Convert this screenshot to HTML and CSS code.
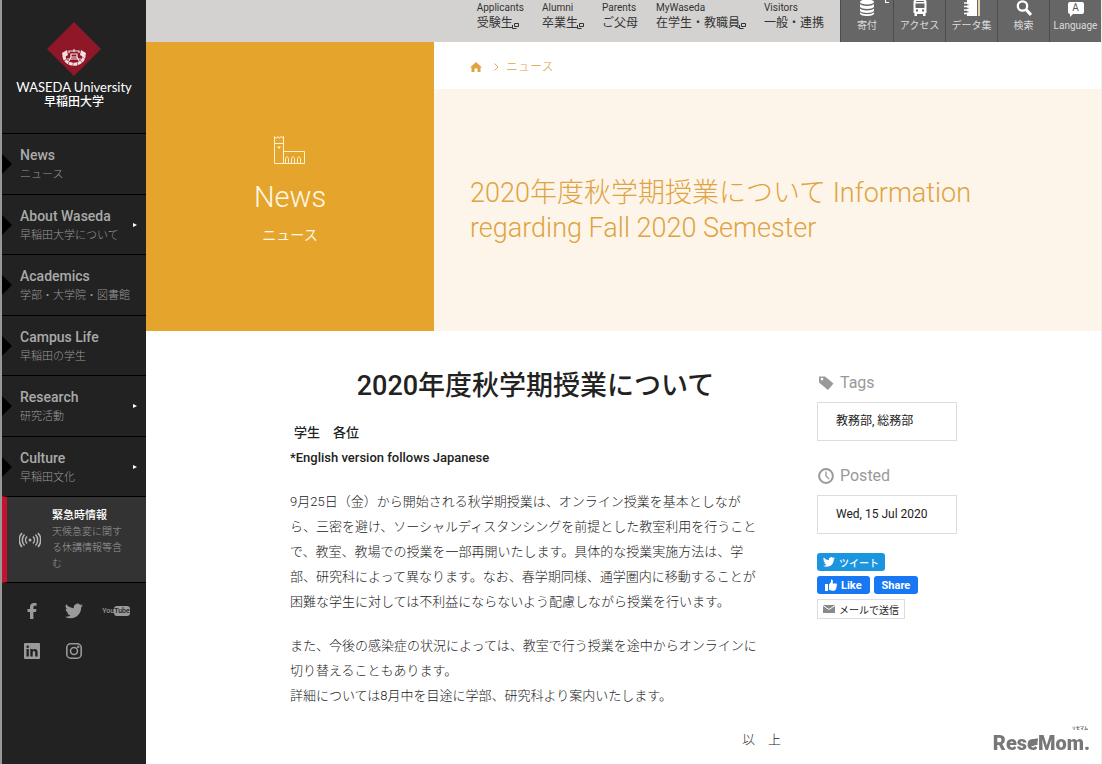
FILE: index.html
```html
<!DOCTYPE html>
<html lang="ja">
<head>
    <meta charset="UTF-8">
    <meta name="viewport" content="width=device-width, initial-scale=1.0">
    <title>2020年度秋学期授業について – 早稲田大学</title>
    <link rel="stylesheet" href="styles.css">
</head>
<body>
    <!-- shared icons -->
    <svg width="0" height="0" class="sprite" aria-hidden="true">
        <symbol id="twitter" viewBox="0 0 24 24">
            <path d="M24 4.6a10 10 0 0 1-2.8.8 5 5 0 0 0 2.1-2.7 10 10 0 0 1-3.1 1.2 4.9 4.9 0 0 0-8.4 4.5A14 14 0 0 1 1.7 3.1a4.9 4.9 0 0 0 1.5 6.6 5 5 0 0 1-2.2-.6v.1a4.9 4.9 0 0 0 3.9 4.8 5 5 0 0 1-2.2.1 4.9 4.9 0 0 0 4.6 3.4A10 10 0 0 1 0 19.5a14 14 0 0 0 7.5 2.2c9.1 0 14-7.5 14-14v-.6A10 10 0 0 0 24 4.6z"/>
        </symbol>
        <symbol id="window" viewBox="0 0 7 7">
            <path d="M2.5 1.5h4v3h-4zM.5 3v3.5h4" fill="none" stroke="currentColor"/>
        </symbol>
    </svg>

    <aside class="sidebar">
        <a class="logo" href="#">
            <svg width="54" height="54" viewBox="0 0 54 54" aria-hidden="true">
                <path fill="#8e1728" d="M27 0l27 27-27 27L0 27z"/>
                <path fill="none" stroke="#f6dfe2" stroke-width="3" stroke-dasharray="4 .5" d="M17 34c1 11 19 11 20 0"/>
                <path fill="#f6dfe2" d="M15 31l5-3 1 5-5 3zM39 31l-5-3-1 5 5 3z"/>
                <path fill="none" stroke="#f6dfe2" stroke-width="1.2" d="M22 31v-2h10v2M27 27v3M24 32h6v3h-6zM20 37h14M24 35l-2 4M30 35l2 4"/>
            </svg>
            <span class="logo-en">WASEDA University</span>
            <span class="logo-ja">早稲田大学</span>
        </a>

        <nav class="menu">
            <a href="#"><strong>News</strong><span>ニュース</span></a>
            <a href="#" class="has-sub"><strong>About Waseda</strong><span>早稲田大学について</span></a>
            <a href="#"><strong>Academics</strong><span>学部・大学院・図書館</span></a>
            <a href="#"><strong>Campus Life</strong><span>早稲田の学生</span></a>
            <a href="#" class="has-sub"><strong>Research</strong><span>研究活動</span></a>
            <a href="#" class="has-sub"><strong>Culture</strong><span>早稲田文化</span></a>
        </nav>

        <a class="emergency" href="#">
            <svg width="22" height="16" viewBox="0 0 22 16" fill="none" stroke="#b5b5b5" stroke-width="1.5" aria-hidden="true">
                <circle cx="11" cy="8" r="1.5" fill="#b5b5b5" stroke="none"/>
                <path d="M8 4.5a5 5 0 0 0 0 7M14 4.5a5 5 0 0 1 0 7M5.5 2.5a8 8 0 0 0 0 11M16.5 2.5a8 8 0 0 1 0 11M3 1a10.5 10.5 0 0 0 0 14M19 1a10.5 10.5 0 0 1 0 14"/>
            </svg>
            <span class="emergency-text"><strong>緊急時情報</strong>天候急変に関する休講情報等含む</span>
        </a>

        <div class="social">
            <a href="#" aria-label="Facebook">
                <svg width="16" height="16" viewBox="0 0 16 16"><path d="M6 16V9H3.500V6H6V4c0-2.700 1.500-4 4-4h2.500v2.800H11c-1.200 0-1.600.5-1.600 1.600V6h3l-.4 3H9.400v7z"/></svg>
            </a>
            <a href="#" aria-label="Twitter">
                <svg width="18" height="18"><use href="#twitter"/></svg>
            </a>
            <a href="#" class="youtube" aria-label="YouTube"><span>You</span><span class="tube">Tube</span></a>
            <a href="#" aria-label="LinkedIn">
                <svg width="16" height="16" viewBox="0 0 16 16"><path fill-rule="evenodd" d="M1 0h14a1 1 0 0 1 1 1v14a1 1 0 0 1-1 1H1a1 1 0 0 1-1-1V1a1 1 0 0 1 1-1zm1.500 6v7.500h2.300V6zm1.200-3.600a1.300 1.300 0 1 0 0 2.600 1.300 1.300 0 0 0 0-2.600zM6.300 6v7.500h2.400v-4c0-2 2.500-2.200 2.500 0v4h2.400V9c0-3.600-3.600-3.800-4.900-1.900V6z"/></svg>
            </a>
            <a href="#" aria-label="Instagram">
                <svg width="16" height="16" viewBox="0 0 16 16" fill="none" stroke="#9a9a9a" stroke-width="1.6"><rect x=".8" y=".8" width="14.4" height="14.4" rx="4"/><circle cx="8" cy="8" r="3.5"/><circle cx="12.2" cy="3.8" r=".5"/></svg>
            </a>
        </div>
    </aside>

    <main>
        <header class="topbar">
            <nav class="audience">
                <a href="#"><span>Applicants</span>受験生<svg width="7" height="7"><use href="#window"/></svg></a>
                <a href="#"><span>Alumni</span>卒業生<svg width="7" height="7"><use href="#window"/></svg></a>
                <a href="#"><span>Parents</span>ご父母</a>
                <a href="#"><span>MyWaseda</span>在学生・教職員<svg width="7" height="7"><use href="#window"/></svg></a>
                <a href="#"><span>Visitors</span>一般・連携</a>
            </nav>
            <nav class="tools">
                <a href="#">
                    <svg width="16" height="16" viewBox="0 0 16 16"><ellipse cx="8" cy="2" rx="7" ry="2.500"/><path d="M1 4c2 2.500 12 2.500 14 0v3c-2 2.500-12 2.500-14 0zM1 8.500c2 2.500 12 2.500 14 0v2.500c-2 2.500-12 2.500-14 0zM1 12.300c2 2.500 12 2.500 14 0V14c-2 2.700-12 2.700-14 0z"/></svg>
                    寄付
                    <svg class="corner" width="4" height="3" viewBox="0 0 4 3"><path d="M0 0h1v2h3v1H0z"/></svg>
                </a>
                <a href="#">
                    <svg width="16" height="16" viewBox="0 0 16 16"><path fill-rule="evenodd" d="M3 0h10c1 0 1.500.6 1.500 1.500V13h-1v3H11v-2H5v2H2.500v-3h-1V1.500C1.500.6 2 0 3 0zm1 1v1h8V1zM3.500 3.500V8h9V3.500zm.5 6v2h2v-2zm6 0v2h2v-2z"/></svg>
                    アクセス
                </a>
                <a href="#">
                    <svg width="16" height="16" viewBox="0 0 16 16"><path d="M3 0h10v16H3z"/><path fill="#e5d3b0" d="M14 0h2v16h-2z"/><path d="M0 3h4M0 6.500h4M0 10h4M0 13.500h4" stroke="#fff" stroke-width="1.5"/><path d="M3 4.800h1.500M3 8.300h1.500M3 11.800h1.500" stroke="#666"/></svg>
                    データ集
                </a>
                <a href="#">
                    <svg width="16" height="16" viewBox="0 0 16 16" fill="none" stroke="#fff"><circle cx="6.500" cy="6" r="4.700" stroke-width="2.3"/><path d="M10 9.500l5 5.500" stroke-width="3"/></svg>
                    検索
                </a>
                <a href="#">
                    <span class="bubble">A</span>
                    Language
                </a>
            </nav>
        </header>

        <section class="hero">
            <div class="category">
                <svg width="32" height="28" viewBox="0 0 32 28" fill="none" stroke="#fff3cf" aria-hidden="true">
                    <path d="M.5 27.500V.5l2 2 1.500-2 1.500 2 1.500-2 2.500 2V.5v27M.5 7.500h9M9.500.5v27M9.500 15.500h21v12H.5"/>
                    <path fill="#fff3cf" stroke="none" d="M3 10.500h4l-2 2.500z"/>
                    <path d="M11.500 27v-4.500c0-2 3-2 3 0V27M17.500 27v-4.500c0-2 3-2 3 0V27M23.500 27v-4.500c0-2 3-2 3 0V27"/>
                </svg>
                <p class="category-en">News</p>
                <p class="category-ja">ニュース</p>
            </div>
            <div class="headline">
                <nav class="breadcrumb">
                    <a href="#" aria-label="Home"><svg width="12" height="10" viewBox="0 0 12 10"><path d="M6 0l6 5.500h-1.500V10h-3V6.500h-3V10h-3V5.500H0z"/></svg></a>
                    <svg width="5" height="8" viewBox="0 0 5 8"><path d="M.5.5L4 4 .5 7.500" fill="none" stroke="#dfae52"/></svg>
                    <a href="#">ニュース</a>
                </nav>
                <h1>2020年度秋学期授業について Information regarding Fall 2020 Semester</h1>
            </div>
        </section>

        <div class="content">
            <article>
                <h2>2020年度秋学期授業について</h2>
                <p class="lead"><span>学生　各位</span><br>*English version follows Japanese</p>
                <p>9月25日（金）から開始される秋学期授業は、オンライン授業を基本としなが<br>ら、三密を避け、ソーシャルディスタンシングを前提とした教室利用を行うこと<br>で、教室、教場での授業を一部再開いたします。具体的な授業実施方法は、学<br>部、研究科によって異なります。なお、春学期同様、通学圏内に移動することが<br>困難な学生に対しては不利益にならないよう配慮しながら授業を行います。</p>
                <p>また、今後の感染症の状況によっては、教室で行う授業を途中からオンラインに<br>切り替えることもあります。<br>詳細については8月中を目途に学部、研究科より案内いたします。</p>
                <p class="closing">以　上</p>
            </article>

            <aside class="meta">
                <h3>
                    <svg width="16" height="16" viewBox="0 0 16 16"><path fill-rule="evenodd" d="M1 1.500h6l8.500 7-5.500 6.500L1 7.500zm3 1.300a1.300 1.300 0 1 0 0 2.600 1.300 1.300 0 0 0 0-2.600z"/></svg>
                    Tags
                </h3>
                <p class="box">教務部, 総務部</p>
                <h3>
                    <svg width="16" height="16" viewBox="0 0 16 16" fill="none" stroke="#999"><circle cx="8" cy="8" r="6.900" stroke-width="2"/><path d="M8 3.500V8l3 3" stroke-width="1.3"/></svg>
                    Posted
                </h3>
                <p class="box">Wed, 15 Jul 2020</p>
                <div class="share">
                    <button type="button" class="btn tweet"><svg width="12" height="12"><use href="#twitter"/></svg>ツイート</button>
                    <div class="facebook">
                        <button type="button" class="btn"><svg width="12" height="12" viewBox="0 0 12 12"><path d="M0 5h3v7H0zM4 5.500L6 3V.5c1.600-.5 2.300 1 1.600 4H11c1.200 0 1.200 1.500.5 2 .7.6.4 1.600-.3 1.900.4.600 0 1.500-.5 1.700.1 1-.5 1.600-1.700 1.600-2 0-3.500-.2-5-1z"/></svg>Like</button>
                        <button type="button" class="btn">Share</button>
                    </div>
                    <button type="button" class="btn mail"><svg width="12" height="8" viewBox="0 0 12 8"><path fill="#8a8a8a" d="M0 0h12v8H0z"/><path d="M0 .5l6 4 6-4" fill="none" stroke="#fff"/></svg>メールで送信</button>
                </div>
            </aside>
        </div>
    </main>

    <div class="watermark">
        <small>リセマム</small>
        <div>Res<span class="leaf">e<svg width="8" height="9" viewBox="0 0 9 9"><path d="M0 9C0 3 3 0 9 0c0 6-3 9-9 9z"/></svg></span>Mom.</div>
    </div>
</body>
</html>
```
FILE: styles.css
```css
* {
    margin: 0;
    padding: 0;
    box-sizing: border-box;
}

body {
    display: flex;
    min-height: 100vh;
    font-family: Roboto, "Noto Sans CJK JP", sans-serif;
    font-size: 13px;
    color: #222;
    background: #fff;
    border-left: 2px solid #999;
    border-right: 1px solid #eee;
}

a {
    color: inherit;
    text-decoration: none;
}

.sprite {
    position: absolute;
}

/* sidebar */
.sidebar {
    flex: none;
    width: 144px;
    background: #222;
    color: #999;
}

.logo {
    display: flex;
    flex-direction: column;
    align-items: center;
    height: 133px;
    padding-top: 22px;
    color: #fff;
    white-space: nowrap;
}

.logo-en {
    margin-top: 2px;
    font-family: Lato, sans-serif;
    font-size: 13px;
    line-height: 18px;
}

.logo-ja {
    font-size: 12px;
    font-weight: 500;
    line-height: 12px;
}

.menu a {
    position: relative;
    display: block;
    height: 61px;
    padding: 12px 0 0 18px;
    border-top: 1px solid #000;
    white-space: nowrap;
}

.menu a:nth-child(even) {
    height: 60px;
}

.menu a::before {
    content: "";
    position: absolute;
    left: 0;
    top: 20px;
    border: 10px solid transparent;
    border-left-color: #000;
    border-right: 0;
}

.menu .has-sub::after {
    content: "";
    position: absolute;
    right: 9px;
    top: 28px;
    border: 2px solid transparent;
    border-left: 4px solid #fff;
    border-right: 0;
}

.menu strong {
    display: block;
    font-size: 14px;
    font-weight: 500;
    line-height: 18px;
    color: #aaa;
}

.menu span {
    display: block;
    font-size: 11px;
    font-weight: 300;
    line-height: 21px;
}

.emergency {
    display: flex;
    align-items: center;
    gap: 11px;
    height: 87px;
    padding: 0 19px 0 12px;
    background: #333;
    border-left: 5px solid #c4122f;
    border-top: 1px solid #000;
    border-bottom: 1px solid #000;
    font-size: 10px;
    font-weight: 300;
    line-height: 16px;
}

.emergency svg {
    flex: none;
}

.emergency strong {
    display: block;
    font-size: 11px;
    font-weight: 500;
    color: #fff;
}

.social {
    display: grid;
    grid-template-columns: 42px 42px 42px;
    grid-auto-rows: 40px;
    padding: 8px 0 0 9px;
    fill: #9a9a9a;
}

.social a {
    display: flex;
    align-items: center;
    justify-content: center;
}

.youtube {
    font-size: 7px;
    font-weight: 500;
    line-height: 10px;
}

.tube {
    background: #9a9a9a;
    border-radius: 3px;
    color: #222;
}

/* top bar */
main {
    flex: 1;
    min-width: 0;
}

.topbar {
    display: flex;
    justify-content: flex-end;
    height: 42px;
    background: #d3d2d0;
}

.audience {
    display: flex;
    gap: 18px;
    padding-right: 16px;
    color: #333;
    font-size: 12px;
    line-height: 16px;
    white-space: nowrap;
}

.audience span {
    display: block;
    font-size: 10px;
    line-height: 15px;
}

.audience svg {
    margin-left: -1px;
    vertical-align: -2px;
}

.tools {
    display: grid;
    grid-template-columns: 53px repeat(4, 52px);
    background: #666;
    color: #ddd;
    font-size: 10px;
    line-height: 19px;
    fill: #fff;
}

.tools a {
    position: relative;
    display: flex;
    flex-direction: column;
    align-items: center;
    border-left: 1px solid #4d4d4d;
    white-space: nowrap;
}

.corner {
    position: absolute;
    right: 4px;
    top: 0;
}

.bubble {
    width: 16px;
    height: 12px;
    margin: 2px 0;
    background: #fff;
    border-radius: 2px;
    color: #555;
    font-size: 10px;
    line-height: 12px;
    text-align: center;
}

.bubble::after {
    content: "";
    position: absolute;
    left: 20px;
    top: 13px;
    border-left: 4px solid #fff;
    border-bottom: 4px solid transparent;
}

/* hero */
.hero {
    display: grid;
    grid-template-columns: 288px 1fr;
    min-height: 289px;
}

.category {
    display: flex;
    flex-direction: column;
    align-items: center;
    padding-top: 94px;
    background: #e5a52d;
    color: #fff8e4;
}

.category-en {
    margin-top: 14px;
    font-size: 29px;
    font-weight: 300;
    line-height: 38px;
}

.category-ja {
    margin-top: 9px;
    font-size: 14px;
    font-weight: 400;
    line-height: 20px;
}

.headline {
    display: flex;
    flex-direction: column;
    background: #fdf5ea;
    color: #e0a341;
}

.breadcrumb {
    display: flex;
    align-items: center;
    gap: 7px;
    height: 47px;
    padding: 3px 36px 0;
    background: #fff;
    font-size: 12px;
    font-weight: 300;
    line-height: 12px;
    fill: #e0a341;
}

.breadcrumb > svg {
    margin-left: 5px;
}

.breadcrumb a {
    display: flex;
}

h1 {
    margin: auto 0;
    padding: 2px 100px 0 36px;
    font-size: 27px;
    font-weight: 300;
    line-height: 35px;
}

/* article */
.content {
    display: flex;
    justify-content: center;
    gap: 36px;
    padding-top: 37px;
}

article {
    width: 491px;
    font-weight: 300;
    line-height: 25px;
}

h2 {
    font-size: 27px;
    font-weight: 500;
    line-height: 36px;
    text-align: center;
}

article p {
    margin-bottom: 19px;
}

.lead {
    margin-top: 16px;
    font-weight: 500;
}

.lead span {
    padding-left: 4px;
}

article .closing {
    text-align: right;
}

.meta {
    width: 140px;
    padding-top: 5px;
}

.meta h3 {
    display: flex;
    align-items: center;
    gap: 6px;
    margin-bottom: 9px;
    padding-left: 1px;
    font-size: 16px;
    font-weight: 400;
    line-height: 20px;
    color: #999;
    fill: #999;
}

.box {
    margin-bottom: 25px;
    padding: 0 18px;
    border: 1px solid #ddd;
    font-size: 12px;
    line-height: 37px;
}

.share {
    display: flex;
    flex-direction: column;
    align-items: flex-start;
    gap: 5px;
    margin-top: -6px;
}

.facebook {
    display: flex;
    gap: 4px;
}

.btn {
    display: flex;
    align-items: center;
    gap: 4px;
    height: 18px;
    padding: 0 8px;
    border: 0;
    border-radius: 3px;
    background: #1877f2;
    color: #fff;
    font-family: inherit;
    font-size: 11px;
    font-weight: 700;
    fill: #fff;
    white-space: nowrap;
}

.tweet {
    padding: 0 6px;
    background: #1b95e0;
    font-size: 10px;
    font-weight: 500;
}

.mail {
    height: 20px;
    padding: 0 5px;
    border: 1px solid #ddd;
    border-radius: 0;
    background: #fff;
    color: #222;
    font-size: 10px;
    font-weight: 400;
}

/* watermark */
.watermark {
    position: fixed;
    right: 12px;
    bottom: 8px;
    color: #777;
    font-family: Roboto, sans-serif;
    font-size: 20px;
    font-weight: 900;
    line-height: 26px;
    fill: #777;
}

.watermark small {
    display: block;
    padding-right: 2px;
    font-family: "Noto Sans CJK JP", sans-serif;
    font-size: 4px;
    line-height: 4px;
    text-align: right;
}

.leaf {
    position: relative;
}

.leaf svg {
    position: absolute;
    right: 0;
    top: 7px;
}
```
